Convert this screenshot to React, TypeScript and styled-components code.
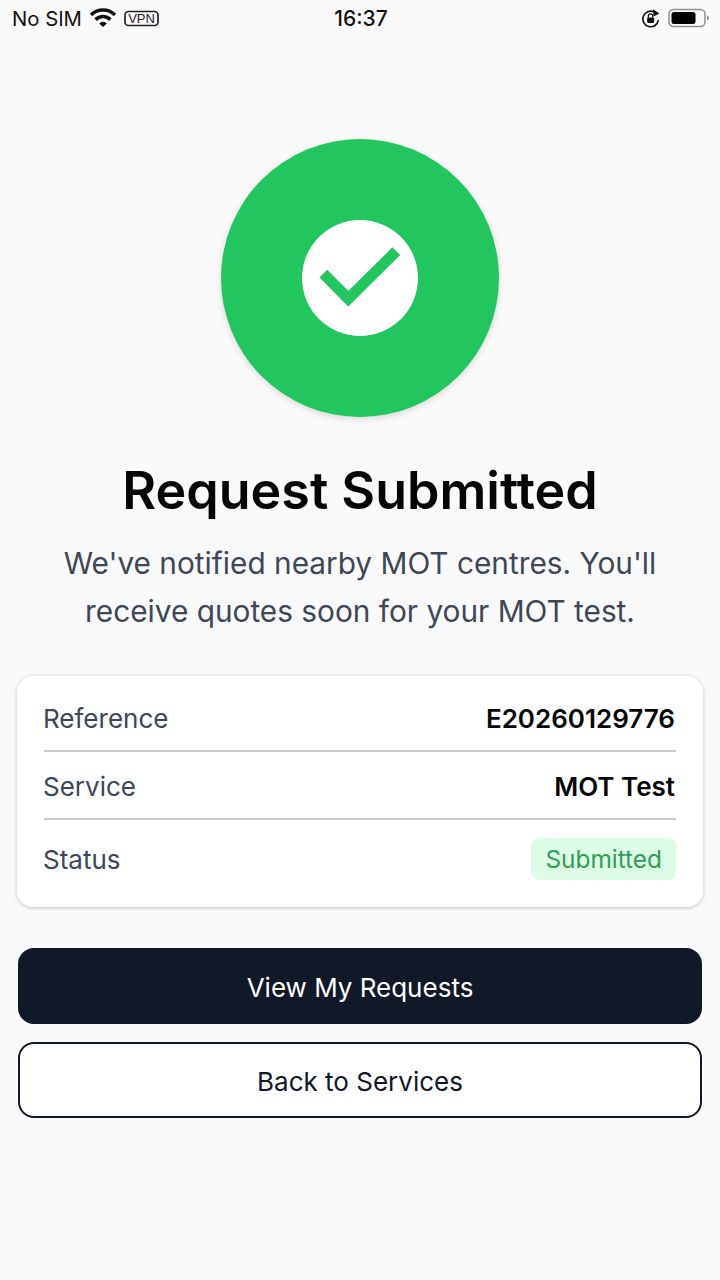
import React from "react";
import styled, { createGlobalStyle } from "styled-components";

const Global = createGlobalStyle`
  html, body { margin: 0; padding: 0; background: #fafafb; }
  body { font-family: Inter, "Noto Sans", sans-serif; }
  * { box-sizing: border-box; }
`;

const Screen = styled.div`
  width: 720px;
  height: 1280px;
  overflow: hidden;
  background: #fafafb;
  display: flex;
  flex-direction: column;
`;

const StatusBar = styled.div`
  height: 36px;
  padding: 0 10px 0 12px;
  display: grid;
  grid-template-columns: 1fr auto 1fr;
  align-items: center;
  color: #111;
`;

const StatusLeft = styled.div`
  display: flex;
  align-items: center;
  gap: 8px;
  font-size: 20.3px;
`;

const StatusTime = styled.div`
  font-size: 21px;
  font-weight: 500;
`;

const StatusRight = styled.div`
  display: flex;
  justify-content: flex-end;
  align-items: center;
  gap: 7px;
`;

const Main = styled.main`
  display: flex;
  flex-direction: column;
  align-items: center;
  padding: 103px 17px 0;
`;

const Badge = styled.div`
  width: 278px;
  height: 278px;
  border-radius: 50%;
  background: #22c55e;
  box-shadow: 0 2px 7px rgba(0, 0, 0, 0.14);
  display: flex;
  align-items: center;
  justify-content: center;
`;

const BadgeInner = styled.div`
  width: 116px;
  height: 116px;
  border-radius: 50%;
  background: #fff;
  display: flex;
  align-items: center;
  justify-content: center;
`;

const Title = styled.h1`
  margin: 45px 0 0;
  font-size: 52px;
  line-height: 58px;
  font-weight: 600;
  color: #050508;
  text-align: center;
  white-space: nowrap;
`;

const Subtitle = styled.p`
  margin: 19px 0 0;
  font-size: 29.8px;
  line-height: 48px;
  font-weight: 400;
  color: #3d4756;
  text-align: center;
`;

const Card = styled.section`
  width: 686px;
  margin-top: 41px;
  padding: 9px 27px;
  background: #fff;
  border-radius: 16px;
  box-shadow: 0 1px 4px rgba(0, 0, 0, 0.22);
`;

const Row = styled.div<{ $h: number; $last?: boolean }>`
  height: ${(p) => p.$h}px;
  padding-top: ${(p) => (p.$last ? 0 : 2)}px;
  display: flex;
  align-items: center;
  justify-content: space-between;
  border-bottom: ${(p) => (p.$last ? "none" : "2px solid #c9cbce")};
`;

const Label = styled.span`
  font-size: 26px;
  color: #3d4756;
  margin-left: -1px;
`;

const Value = styled.span`
  font-size: 26px;
  font-weight: 600;
  color: #050508;
  margin-right: 1px;
`;

const Pill = styled.span`
  height: 42px;
  padding: 0 14px;
  display: flex;
  align-items: center;
  border-radius: 8px;
  background: #dcfce7;
  color: #2f9e55;
  font-size: 24.4px;
  font-weight: 400;
`;

const Button = styled.button<{ $primary?: boolean }>`
  width: 684px;
  height: 76px;
  padding: 2px 0 0;
  border-radius: 16px;
  border: 2px solid #111827;
  background: ${(p) => (p.$primary ? "#111827" : "#fff")};
  color: ${(p) => (p.$primary ? "#fff" : "#111827")};
  font-family: inherit;
  font-size: 26px;
  font-weight: 400;
  margin-top: ${(p) => (p.$primary ? "41px" : "18px")};
`;

const Wifi = () => (
  <svg width="26" height="20" viewBox="0 0 26 20">
    <path d="M1 7A17 17 0 0 1 25 7" fill="none" stroke="#111" strokeWidth="3.600" />
    <path d="M5.600 11.600A10.500 10.500 0 0 1 20.400 11.600" fill="none" stroke="#111" strokeWidth="3.600" />
    <path d="M13 19L9.200 15.400A5.300 5.300 0 0 1 16.800 15.400Z" fill="#111" />
  </svg>
);

const Vpn = () => (
  <svg width="35" height="17" viewBox="0 0 35 17">
    <rect x="1" y="1.500" width="33" height="14" rx="3.500" fill="none" stroke="#222" strokeWidth="1.700" />
    <text x="17.500" y="13.200" textAnchor="middle" fontFamily="Liberation Sans, sans-serif" fontSize="13" fill="#222">VPN</text>
  </svg>
);

const Lock = () => (
  <svg width="20" height="19" viewBox="0 0 19 18">
    <path d="M16.500 10.500A7.400 7.400 0 1 1 12.500 2.800" fill="none" stroke="#111" strokeWidth="1.600" />
    <path d="M11.500 0.200l6 4-5.600 2.800z" fill="#111" />
    <rect x="5.800" y="8" width="6.600" height="5.200" rx="1" fill="#111" />
    <path d="M7 8V6.800a2.100 2.100 0 0 1 4.200 0V8" fill="none" stroke="#111" strokeWidth="1.200" />
  </svg>
);

const Battery = () => (
  <svg width="42" height="20" viewBox="0 0 42 20">
    <rect x="1" y="1.500" width="36" height="17" rx="4.500" fill="none" stroke="#8e8e8e" strokeWidth="1.500" />
    <rect x="3.500" y="4" width="24" height="12" rx="2.500" fill="#000" />
    <path d="M39 7.500c1.300.4 2 1.300 2 2.500s-.7 2.100-2 2.500z" fill="#8e8e8e" />
  </svg>
);

const Check = () => (
  <svg width="90" height="70" viewBox="0 0 90 70">
    <path d="M8.300 30.700L33.300 55.700 81.300 8.200" fill="none" stroke="#22c55e" strokeWidth="11" />
  </svg>
);

export default function App() {
  return (
    <Screen>
      <Global />
      <StatusBar>
        <StatusLeft>
          <span>No SIM</span>
          <Wifi />
          <Vpn />
        </StatusLeft>
        <StatusTime>16:37</StatusTime>
        <StatusRight>
          <Lock />
          <Battery />
        </StatusRight>
      </StatusBar>
      <Main>
        <Badge>
          <BadgeInner>
            <Check />
          </BadgeInner>
        </Badge>
        <Title>Request Submitted</Title>
        <Subtitle>
          We've notified nearby MOT centres. You'll
          <br />
          receive quotes soon for your MOT test.
        </Subtitle>
        <Card>
          <Row $h={67}>
            <Label>Reference</Label>
            <Value>E20260129776</Value>
          </Row>
          <Row $h={68}>
            <Label>Service</Label>
            <Value>MOT Test</Value>
          </Row>
          <Row $h={78} $last>
            <Label>Status</Label>
            <Pill>Submitted</Pill>
          </Row>
        </Card>
        <Button $primary>View My Requests</Button>
        <Button>Back to Services</Button>
      </Main>
    </Screen>
  );
}
